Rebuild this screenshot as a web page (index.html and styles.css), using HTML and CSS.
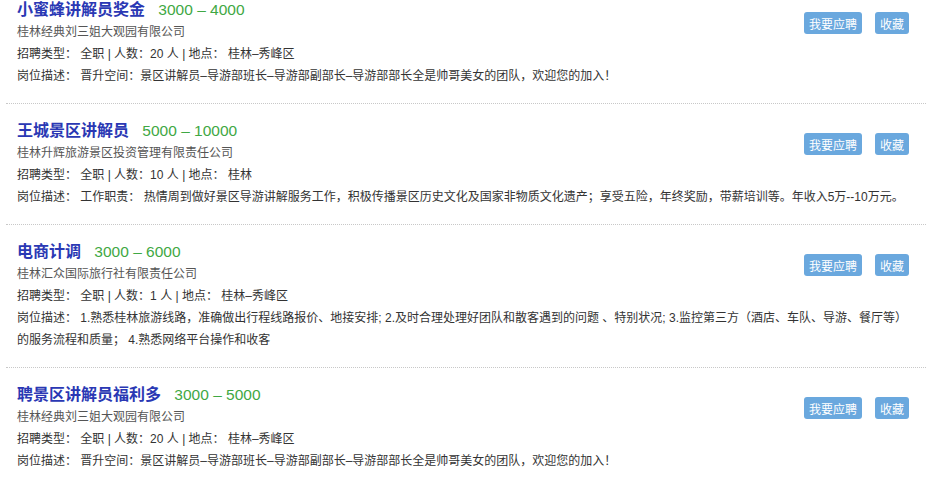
FILE: index.html
```html
<!DOCTYPE html>
<html lang="zh-CN">
<head>
    <meta charset="UTF-8">
    <meta name="viewport" content="width=device-width, initial-scale=1.0">
    <title>招聘信息</title>
    <link rel="stylesheet" href="styles.css">
</head>
<body>
    <div class="job-list">
        <div class="job">
            <div class="actions">
                <button class="btn">我要应聘</button>
                <button class="btn">收藏</button>
            </div>
            <div class="job-title">
                <a href="#" class="name">小蜜蜂讲解员奖金</a>
                <span class="salary">3000 – 4000</span>
            </div>
            <div class="company">桂林经典刘三姐大观园有限公司</div>
            <div class="meta">招聘类型： 全职 | 人数：20 人 | 地点： 桂林–秀峰区</div>
            <div class="desc">岗位描述： 晋升空间：景区讲解员–导游部班长–导游部副部长–导游部部长全是帅哥美女的团队，欢迎您的加入！</div>
        </div>

        <div class="job">
            <div class="actions">
                <button class="btn">我要应聘</button>
                <button class="btn">收藏</button>
            </div>
            <div class="job-title">
                <a href="#" class="name">王城景区讲解员</a>
                <span class="salary">5000 – 10000</span>
            </div>
            <div class="company">桂林升辉旅游景区投资管理有限责任公司</div>
            <div class="meta">招聘类型： 全职 | 人数：10 人 | 地点： 桂林</div>
            <div class="desc">岗位描述： 工作职责： 热情周到做好景区导游讲解服务工作，积极传播景区历史文化及国家非物质文化遗产；享受五险，年终奖励，带薪培训等。年收入5万--10万元。</div>
        </div>

        <div class="job">
            <div class="actions">
                <button class="btn">我要应聘</button>
                <button class="btn">收藏</button>
            </div>
            <div class="job-title">
                <a href="#" class="name">电商计调</a>
                <span class="salary">3000 – 6000</span>
            </div>
            <div class="company">桂林汇众国际旅行社有限责任公司</div>
            <div class="meta">招聘类型： 全职 | 人数：1 人 | 地点： 桂林–秀峰区</div>
            <div class="desc">岗位描述： 1.熟悉桂林旅游线路，准确做出行程线路报价、地接安排; 2.及时合理处理好团队和散客遇到的问题 、特别状况; 3.监控第三方（酒店、车队、导游、餐厅等）的服务流程和质量； 4.熟悉网络平台操作和收客</div>
        </div>

        <div class="job">
            <div class="actions">
                <button class="btn">我要应聘</button>
                <button class="btn">收藏</button>
            </div>
            <div class="job-title">
                <a href="#" class="name">聘景区讲解员福利多</a>
                <span class="salary">3000 – 5000</span>
            </div>
            <div class="company">桂林经典刘三姐大观园有限公司</div>
            <div class="meta">招聘类型： 全职 | 人数：20 人 | 地点： 桂林–秀峰区</div>
            <div class="desc">岗位描述： 晋升空间：景区讲解员–导游部班长–导游部副部长–导游部部长全是帅哥美女的团队，欢迎您的加入！</div>
        </div>
    </div>
</body>
</html>
```

FILE: styles.css
```css
body {
    margin: 0;
    background: #fff;
    color: #333;
    font-family: "Liberation Sans", "Noto Sans CJK SC", sans-serif;
    font-size: 12px;
}
.job-list {
    margin: -17px 6px 0 6px;
}
.job {
    padding: 16px 17px 16px 11px;
    border-bottom: 1px dotted #c8c8c8;
}
.job:last-child {
    border-bottom: none;
}
.actions {
    float: right;
    margin-top: 13px;
    display: flex;
    gap: 13px;
}
.btn {
    height: 22px;
    padding: 0 5px;
    border: none;
    border-radius: 3px;
    background-color: #6aa8de;
    color: #fff;
    font-family: inherit;
    font-size: 12px;
    cursor: pointer;
}
.job-title {
    height: 22px;
    line-height: 22px;
}
.name {
    color: #2a38b4;
    font-size: 16px;
    font-weight: bold;
    text-decoration: none;
}
.salary {
    margin-left: 10px;
    color: #3fa844;
    font-size: 15.5px;
}
.company {
    line-height: 22px;
    color: #555;
}
.meta, .desc {
    line-height: 22px;
}
```
